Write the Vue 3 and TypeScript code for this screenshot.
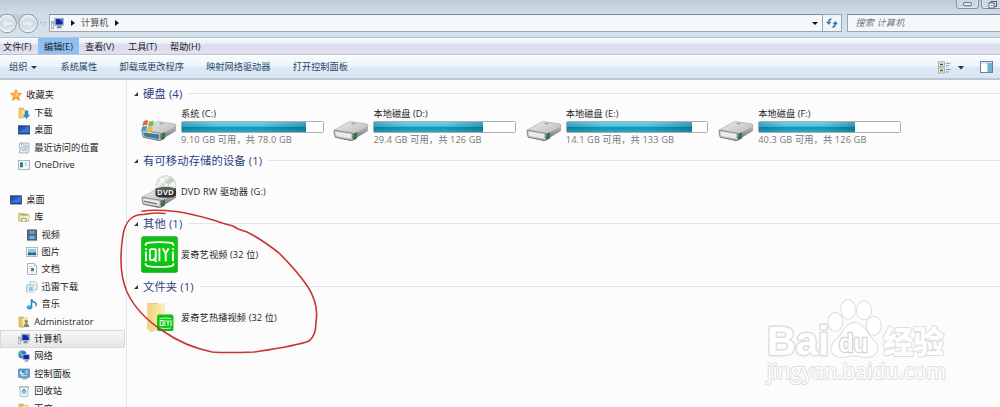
<script setup lang="ts">
interface NavItem { label: string; icon: string; level: number; active?: boolean; gap?: boolean }
interface Disk { name: string; info: string; used: number; icon: string }

const menus = [
  { label: '文件(F)', w: 38 },
  { label: '编辑(E)', w: 41, active: true },
  { label: '查看(V)', w: 43 },
  { label: '工具(T)', w: 42 },
  { label: '帮助(H)', w: 44 },
]
const commands = ['系统属性', '卸载或更改程序', '映射网络驱动器', '打开控制面板']
const nav: NavItem[] = [
  { label: '收藏夹', icon: 'star', level: 0 },
  { label: '下载', icon: 'download', level: 1 },
  { label: '桌面', icon: 'desktop', level: 1 },
  { label: '最近访问的位置', icon: 'recent', level: 1 },
  { label: 'OneDrive', icon: 'onedrive', level: 1 },
  { label: '桌面', icon: 'desktop', level: 0, gap: true },
  { label: '库', icon: 'library', level: 1 },
  { label: '视频', icon: 'video', level: 2 },
  { label: '图片', icon: 'picture', level: 2 },
  { label: '文档', icon: 'document', level: 2 },
  { label: '迅雷下载', icon: 'thunder', level: 2 },
  { label: '音乐', icon: 'music', level: 2 },
  { label: 'Administrator', icon: 'user', level: 1 },
  { label: '计算机', icon: 'computer', level: 1, active: true },
  { label: '网络', icon: 'network', level: 1 },
  { label: '控制面板', icon: 'control', level: 1 },
  { label: '回收站', icon: 'recycle', level: 1 },
  { label: '百度', icon: 'folder', level: 1 },
]
const disks: Disk[] = [
  { name: '系统 (C:)', info: '9.10 GB 可用，共 78.0 GB', used: 88.3, icon: 'drive-win' },
  { name: '本地磁盘 (D:)', info: '29.4 GB 可用，共 126 GB', used: 77, icon: 'drive' },
  { name: '本地磁盘 (E:)', info: '14.1 GB 可用，共 133 GB', used: 89.4, icon: 'drive' },
  { name: '本地磁盘 (F:)', info: '40.3 GB 可用，共 126 GB', used: 68, icon: 'drive' },
]
</script>

<template>
  <div class="window">
    <svg class="defs" width="0" height="0">
      <defs>
        <linearGradient id="gScreen" x1="0" y1="0" x2="1" y2="1"><stop offset="0" stop-color="#123a9c" /><stop offset=".5" stop-color="#2b66d0" /><stop offset="1" stop-color="#1d449d" /></linearGradient>
        <linearGradient id="gFolder" x1="0" y1="0" x2="1" y2="0"><stop offset="0" stop-color="#f5d985" /><stop offset="1" stop-color="#fbeeb9" /></linearGradient>
        <linearGradient id="gTop" x1="0" y1="0" x2="1" y2="1"><stop offset="0" stop-color="#eee" /><stop offset=".55" stop-color="#cfcfcf" /><stop offset="1" stop-color="#b5b5b5" /></linearGradient>
        <linearGradient id="gSide" x1="0" y1="0" x2="0" y2="1"><stop offset="0" stop-color="#b9b9b9" /><stop offset="1" stop-color="#6a6a6a" /></linearGradient>
        <linearGradient id="gBtn" x1="0" y1="0" x2="0" y2="1"><stop offset="0" stop-color="#e9eef3" /><stop offset=".5" stop-color="#cfd8e0" /><stop offset="1" stop-color="#e8f0f6" /></linearGradient>
        <linearGradient id="gGreen" x1="0" y1="0" x2="0" y2="1"><stop offset="0" stop-color="#13bd1c" /><stop offset=".5" stop-color="#08cf0c" /><stop offset="1" stop-color="#0bb814" /></linearGradient>
        <linearGradient id="gDvd" x1="0" y1="0" x2="1" y2="1"><stop offset="0" stop-color="#bbb" /><stop offset=".3" stop-color="#f3f3f3" /><stop offset=".5" stop-color="#b9cfb6" /><stop offset=".7" stop-color="#eee" /><stop offset="1" stop-color="#aaa" /></linearGradient>
      </defs>
      <symbol id="star" viewBox="0 0 12 12"><path d="M6 .6 7.6 4.2 11.5 4.6 8.6 7.2 9.5 11.2 6 9.2 2.5 11.2 3.4 7.2.5 4.6 4.4 4.2Z" fill="#ffb72f" stroke="#d98a2c" stroke-width=".8" /><path d="M6 2.5 7 5 9.4 5.3 6 7Z" fill="#ffdb72" /></symbol>
      <symbol id="download" viewBox="0 0 12 12"><path d="M1 1h4l1 1v9H1Z" fill="#f0d06e" stroke="#c9a33c" stroke-width=".6" /><path d="M4 3h5v7H4Z" fill="#fae9ae" stroke="#d5b65a" stroke-width=".5" /><path d="M7 4h3v4h1.6L8.5 11.6 5.4 8H7Z" fill="#2996d8" stroke="#2270ad" stroke-width=".5" /></symbol>
      <symbol id="desktop" viewBox="0 0 12 12"><rect x=".5" y="1.8" width="11" height="8.2" fill="url(#gScreen)" stroke="#33507d" stroke-width=".9" /><path d="M1 8.5 11 3v6H1Z" fill="#4b8ae5" opacity=".55" /><path d="M1 9.3h10" stroke="#203554" stroke-width=".8" /></symbol>
      <symbol id="recent" viewBox="0 0 12 12"><path d="M2 1h9v7l-1 3H1l1-3Z" fill="#e6edf1" stroke="#8b9ba5" stroke-width=".7" /><circle cx="3.6" cy="3.6" r="2.5" fill="#f8fafb" stroke="#8b9ba5" stroke-width=".7" /><path d="M3.6 2v1.8h1M7 4h3M6 6h4M4 8h5" stroke="#7d929f" stroke-width=".7" fill="none" /></symbol>
      <symbol id="onedrive" viewBox="0 0 12 12"><rect x=".5" y="1.5" width="11" height="9" fill="#f7fafb" stroke="#94a3ab" stroke-width=".8" /><rect x="2" y="3.3" width="3" height="5" fill="#278387" /><path d="M6.5 4h3M6.5 6h3" stroke="#a5b7bf" stroke-width=".8" /></symbol>
      <symbol id="library" viewBox="0 0 12 12"><path d="M.6 2h4l1 1h5v7H.6Z" fill="#f1d988" stroke="#c8a750" stroke-width=".6" /><path d="M2 4.5h9.5l-1 6H2Z" fill="#fbf0bd" stroke="#c8a750" stroke-width=".5" /><path d="M3 8.8q0-2.4 3-2.4t3 2.4v2H7.8V9q0-1.2-1.8-1.2T4.2 9v1.8H3Z" fill="#65b6dd" /><path d="M3 3.5h6" stroke="#68b56d" stroke-width="1" /></symbol>
      <symbol id="video" viewBox="0 0 12 12"><rect x="1" y=".5" width="10" height="11" rx=".6" fill="#343d47" /><rect x="3.2" y="1.4" width="5.6" height="4" fill="#679bd0" /><rect x="3.2" y="6.4" width="5.6" height="4" fill="#6faedc" /><path d="M2.1 1.5v9.5M9.9 1.5v9.5" stroke="#d8dde0" stroke-width=".9" stroke-dasharray="1 1" /></symbol>
      <symbol id="picture" viewBox="0 0 12 12"><rect x=".5" y="1.5" width="11" height="9" fill="#fff" stroke="#8d9fa9" stroke-width=".7" /><rect x="1.8" y="2.8" width="8.4" height="6.4" fill="#8bcde9" /><path d="M1.8 7 4 6 6 7.3 8 6l2.2 1v2.2H1.8Z" fill="#326f75" /></symbol>
      <symbol id="document" viewBox="0 0 12 12"><path d="M1.5.5h6.7l2.3 2.4v8.6h-9Z" fill="#fafcfd" stroke="#94a2ad" stroke-width=".8" /><path d="M8.2.5V3h2.3M3 3.5h3.8M3 5.5h1.5M3 9h5.5" fill="none" stroke="#aab8c2" stroke-width=".7" /><rect x="5" y="5" width="3" height="3" fill="#4e8090" /></symbol>
      <symbol id="thunder" viewBox="0 0 12 12"><path d="M4 .7h5l2 2v6H4Z" fill="#eef6fa" stroke="#88a7ba" stroke-width=".7" /><rect x=".8" y="4" width="7" height="7" fill="#d5eaf4" stroke="#83abc0" stroke-width=".7" /><rect x="2.3" y="5.3" width="5" height="5" fill="#8ac5df" stroke="#f7ffff" stroke-width=".8" /></symbol>
      <symbol id="music" viewBox="0 0 12 12"><path d="M5.5 9V1.2q.5 2.3 3 3.2t1.2 3.8" fill="none" stroke="#1f7fbb" stroke-width="1.4" /><ellipse cx="3.6" cy="9.3" rx="2.8" ry="2.1" fill="#2c9bd4" /><circle cx="3.2" cy="8.8" r=".8" fill="#92d7f0" /></symbol>
      <symbol id="user" viewBox="0 0 12 12"><path d="M1 1h4l1 1v9H1Z" fill="#e6c766" stroke="#b99b46" stroke-width=".6" /><path d="M4 2h5v9H4Z" fill="#fae9ad" stroke="#c8ac5c" stroke-width=".5" /><circle cx="8.3" cy="5.6" r="1.8" fill="#a58567" /><path d="M5.6 11q0-3.5 2.7-3.5T11.3 11Z" fill="#609776" /></symbol>
      <symbol id="computer" viewBox="0 0 12 12"><rect x="3.5" y="1" width="8" height="6.8" fill="#c7d0da" stroke="#8591a0" stroke-width=".5" /><rect x="4.3" y="1.8" width="6.5" height="5.2" fill="#1625ad" /><path d="M7.5 2h3.3v3Z" fill="#5478d8" /><path d="M6 8h3l1.3 2.3H5Z" fill="#818a94" /><rect x=".6" y="4" width="2" height="7" fill="#e3e7eb" stroke="#818992" stroke-width=".5" /><path d="M1 5.5h1.2" stroke="#4b5661" stroke-width=".6" /></symbol>
      <symbol id="network" viewBox="0 0 12 12"><circle cx="4.4" cy="4.5" r="4" fill="#2878c8" /><path d="M1 3Q3 .4 5 1L4 3 5 5 3 7 2 5Z" fill="#55b78b" /><rect x="5" y="4.6" width="6.5" height="5" fill="#1726ad" stroke="#c2ceda" stroke-width=".7" /><path d="M7.5 9.8h2v1.2H6.5h4" stroke="#77818b" stroke-width=".6" fill="none" /></symbol>
      <symbol id="control" viewBox="0 0 12 12"><rect x=".5" y="1" width="11" height="8.5" rx=".7" fill="#5a9fc8" stroke="#4881a8" stroke-width=".7" /><circle cx="4" cy="4.8" r="2.3" fill="#b9e1f3" /><path d="M4 4.8V2.5A2.3 2.3 0 0 1 6.3 4.8Z" fill="#266da1" /><path d="M7.5 3h2.5M7.5 5h2.5M3 7.7h6M4 10.8h5" stroke="#e1f2f9" stroke-width=".8" /><path d="M4 10.8h5" stroke="#79909f" stroke-width="1" /></symbol>
      <symbol id="recycle" viewBox="0 0 12 12"><path d="M1.5 1.5h9l-1 10h-7Z" fill="#f0f7fb" stroke="#8fa8b8" stroke-width=".7" /><path d="M1.5 2h9" stroke="#a7bdc9" /><path d="m4 7 2-2.5L8 7M7.7 8H4.4" fill="none" stroke="#3588be" stroke-width="1.2" /></symbol>
      <symbol id="folder" viewBox="0 0 12 12"><path d="M1 1h4l1 1v10H1Z" fill="#e6c766" stroke="#b99b46" stroke-width=".6" /><path d="M4 2.5h6V12H4Z" fill="#fae9ad" stroke="#c8ac5c" stroke-width=".6" /></symbol>
      <symbol id="drive" viewBox="0 0 36 22">
        <path d="M1 12 2 17.5 18 21 35 11V6.5L18 14Z" fill="url(#gSide)" />
        <path d="M1.3 10 16 1.8Q17 1.3 18.5 1.5L34 4Q36 5 34.5 7L21 14.5Z" fill="url(#gTop)" stroke="#969696" stroke-width=".5" />
        <path d="M1 10.2 21 13.5 20 20.5 3 17.5Q1 17 1 10.2Z" fill="#c2c2c2" stroke="#747474" stroke-width=".7" />
        <path d="M2.3 11.6 18.3 14.1 17.8 18.6 4 16.1Q2.7 15.7 2.3 11.6Z" fill="#e9e9ee" />
        <path d="m21 13.5 3-1.6v6.6L20 20.5Z" fill="#53645a" /><rect x="19.3" y="14.2" width="2" height="4" fill="#287d31" /><rect x="19.6" y="15" width="1" height="1.5" fill="#65df53" />
        <ellipse cx="20.5" cy="3.6" rx="2.3" ry=".8" fill="#a3a3a3" />
      </symbol>
      <symbol id="drive-win" viewBox="0 0 36 22">
        <use href="#drive" width="36" height="22" /><path d="M2 12.2 18.3 14.5 17.8 18.9 3.5 16.4Z" fill="#347f93" />
        <path d="M2.5 1.6Q5 -.3 7.2.7L6.2 5.5Q4 4.4 1.2 6.3Z" fill="#df643a" /><path d="M8.2 1Q10 2.1 13 .5l-1 5q-3 1.6-4.8.4Z" fill="#7eb64a" /><path d="M1.1 7Q4 5.4 6 6.4L5 10.6Q3 9.6 0 11.3Z" fill="#459bd6" /><path d="M7 6.8q2 1.2 4.8-.3l-1 4.7q-2.6 1.4-4.7.3Z" fill="#edbd39" />
      </symbol>
      <symbol id="dvd" viewBox="0 0 36 34">
        <g transform="translate(0 12)"><use href="#drive" width="36" height="22" /><path d="m3 14.2 13 2.7" stroke="#555" stroke-width="1" /></g>
        <circle cx="25" cy="10.5" r="10" fill="url(#gDvd)" stroke="#c5c5c5" stroke-width=".6" /><path d="m25 10.5-7-6 3-2.5ZM25 10.5l8-4 1.5 5Z" fill="#fff" opacity=".75" /><circle cx="25" cy="10" r="2.4" fill="#f8f8f8" stroke="#aaa" stroke-width=".6" />
        <path d="M14.5 13.5q10-3 20.5 0v6.8q-1 2.5-10.2 2.5t-10.3-2.5Z" fill="#333" /><path d="M14.5 13.5q10-3 20.5 0v2q-10-1-20.5 1Z" fill="#777" opacity=".6" />
        <text x="16" y="20.3" font-size="6.8" font-weight="700" fill="#f4f4f4" textLength="17" lengthAdjust="spacingAndGlyphs">DVD</text>
      </symbol>
      <symbol id="iqiyi" viewBox="0 0 37 37">
        <rect x=".4" y=".4" width="36.2" height="36.2" rx="2.5" fill="url(#gGreen)" stroke="#209829" stroke-width=".6" />
        <path d="M4.5 9.8V9Q5 6.9 8 6.7q10.5-1.3 21 0 3 .2 3.5 2.3v.8M4.5 27.2V28q.5 2.1 3.5 2.3 10.5 1.3 21 0 3-.2 3.5-2.3v-.8" fill="none" stroke="#fff" stroke-width="1.7" />
        <g fill="none" stroke="#fff" stroke-width="1.9"><path d="M5 15.6v9.6M18.4 12.2v13M21.8 12.2l2.9 5.6 2.9-5.6M24.7 17.3v7.9M32 15.6v9.6" /><rect x="9" y="13.1" width="5.7" height="11" rx="1" /><path d="m12.8 22 2.6 4" /></g><path d="M4 13h2M31 13h2" stroke="#fff" stroke-width="1.7" />
      </symbol>
      <symbol id="iqiyi-folder" viewBox="0 0 32 32">
        <path d="M3 1h11v27l-7 2-4-3Z" fill="#eccb79" /><path d="M6 3 21 1v25L7 30Z" fill="url(#gFolder)" /><path d="M3 1 8 4v26l-5-3Z" fill="#f2d58b" />
        <rect x="13" y="12.5" width="16.5" height="16.5" rx="2" fill="url(#gGreen)" /><path d="M15.5 16.5q5.8-1 11.5 0M15.5 26q5.8 1 11.5 0" fill="none" stroke="#fff" stroke-width=".8" /><g fill="none" stroke="#fff" stroke-width="1"><rect x="16.2" y="18.5" width="2.8" height="5" /><path d="m18.2 23 1 1.2M20.9 18.2V24M22.6 18.2l1.4 2.6 1.4-2.6M24 20.8V24M27 18.2V24" /></g>
      </symbol>
    </svg>

    <header class="title">
      <div class="arrows">
        <svg width="48" height="24" viewBox="0 0 48 24">
          <path d="M0 3h34v10H0Z" fill="#b5c0ca" opacity=".6" />
          <g v-for="x in [7, 28.2]" :key="x"><circle :cx="x" cy="12.5" r="9.2" fill="url(#gBtn)" stroke="#8a959f" stroke-width="1" /><circle :cx="x" cy="12.5" r="8.2" fill="none" stroke="#f8fbfd" stroke-width=".8" /></g>
          <path d="m2 12.5 5-5v3h6v4H7v3ZM33.2 12.5l-5-5v3h-6v4h6v3Z" fill="#e8eef3" stroke="#bfcad3" stroke-width=".5" />
          <path d="M40.7 11.7h5.2l-2.6 2.8Z" fill="#eff5f9" stroke="#93a1ae" stroke-width=".6" />
        </svg>
      </div>
      <div class="address">
        <svg class="pc"><use href="#computer" /></svg><i class="right"></i><span>计算机</span><i class="right"></i><i class="down"></i>
      </div>
      <div class="refresh"><svg width="12" height="10" viewBox="0 0 12 10"><path d="M5.5 1.2Q2.7 1 2.7 4M6.3 9Q9.3 9 9.3 6" fill="none" stroke="#2f77b0" stroke-width="1.5" /><path d="M0 3.7h5.4L2.7 7ZM6.6 6.2H12L9.3 3Z" fill="#2f77b0" /></svg></div>
      <div class="search">搜索 计算机</div>
      <div class="winbtn min"><svg width="9" height="5"><rect x=".7" y=".7" width="7.6" height="3" rx=".5" fill="#fafcff" stroke="#596574" /></svg></div>
      <div class="winbtn max"><svg width="9" height="8"><rect x="3" y=".5" width="5.5" height="5" fill="none" stroke="#596574" /><rect x="1" y="2" width="5" height="5" fill="#fff" stroke="#596574" /><rect x="3" y="4" width="1.5" height="1" fill="#596574" /></svg></div>
    </header>
    <nav class="menu"><span v-for="m in menus" :key="m.label" :class="{ active: m.active }" :style="{ width: m.w + 'px' }">{{ m.label }}</span></nav>
    <div class="toolbar">
      <span class="org">组织<i class="down"></i></span>
      <span v-for="c in commands" :key="c" class="cmd">{{ c }}</span>
      <svg class="view" width="27" height="13" viewBox="0 0 27 13"><rect x=".5" y=".8" width="6" height="5" fill="#e6ead9" stroke="#939c8b" stroke-width=".7" /><rect x=".5" y="7" width="6" height="5" fill="#f2edbe" stroke="#939c8b" stroke-width=".7" /><path d="M2 3.5h3M2 9.5h3" stroke="#2b5a61" stroke-width="1.3" /><path d="M8 2.3h4.5M8 4.8h3M8 8.5h4.5M8 11h3" stroke="#8b96a4" /><path d="M20 5h6l-3 3.5Z" fill="#1f3356" /></svg>
      <svg class="pane" width="13" height="12" viewBox="0 0 13 12"><rect x=".5" y=".5" width="12" height="11" fill="#fff" stroke="#68829b" /><path d="M1 2h11" stroke="#bac7d3" /><rect x="8" y="2" width="4" height="9" fill="#68b8d5" /><path d="M7.7 1v10" stroke="#6d9eb8" stroke-width=".6" /></svg>
    </div>
    <div class="body">
      <aside>
        <div v-for="(n, i) in nav" :key="i" class="row" :class="['l' + n.level, { active: n.active, gap: n.gap }]">
          <svg class="ico"><use :href="'#' + n.icon" /></svg><span>{{ n.label }}</span>
        </div>
      </aside>
      <main>
        <section class="g1">
          <h2><i></i>硬盘 (4)<b></b></h2>
          <div class="disks">
            <div v-for="d in disks" :key="d.name" class="disk">
              <svg class="drive"><use :href="'#' + d.icon" /></svg>
              <div class="meta"><div class="name">{{ d.name }}</div><div class="bar"><div class="fill" :style="{ width: d.used + '%' }"></div></div><div class="info">{{ d.info }}</div></div>
            </div>
          </div>
        </section>
        <section class="g2"><h2><i></i>有可移动存储的设备 (1)<b></b></h2><div class="item"><svg width="36" height="34"><use href="#dvd" /></svg><span>DVD RW 驱动器 (G:)</span></div></section>
        <section class="g3"><h2><i></i>其他 (1)<b></b></h2><div class="item"><svg width="37" height="37"><use href="#iqiyi" /></svg><span>爱奇艺视频 (32 位)</span></div></section>
        <section class="g4"><h2><i></i>文件夹 (1)<b></b></h2><div class="item"><svg class="fold" width="32" height="32"><use href="#iqiyi-folder" /></svg><span>爱奇艺热播视频 (32 位)</span></div></section>
      </main>
    </div>
    <svg class="overlay" width="1000" height="407" viewBox="0 0 1000 407">
      <path d="M142 211.3C152 209.5 167 210.6 176 211.5C190 213.4 203 217 214 220.2L222 223L233 226L238 229L247 232C259 238 270 246 279 253C290 264 300 275 308 287C315 298 318 310 316 322C316 332 313 338 309 341C296 346 274 349 254 352C240 352.5 225 353 212 352C193 348 177 341 163 331C146 320 134 307 127 292C120 276 120 254 123 235C125 222 132 214 144 214.5C150 213 158 212.6 165 213.5" fill="none" stroke="#c93434" stroke-width="1.6" stroke-linecap="round" stroke-linejoin="round" />
      <g class="mark">
        <text x="767" y="355" class="logo" textLength="62" lengthAdjust="spacingAndGlyphs">Bai</text>
        <g class="paw"><ellipse cx="835.3" cy="322" rx="7" ry="9" /><ellipse cx="848" cy="309.3" rx="6.8" ry="9.2" /><ellipse cx="864" cy="310.3" rx="7.2" ry="9" /><ellipse cx="873.7" cy="325.7" rx="7" ry="9" /><path d="M835 341Q841 336 844 330Q854 316 865 329Q868 335 874 341Q881 350 873 355.5Q868 358 860 356Q854 354.5 848 356Q838 358.500 833 354Q829 348 835 341Z" /></g>
        <text x="839" y="352" class="du" textLength="29" lengthAdjust="spacingAndGlyphs">du</text>
        <text x="883" y="353" class="cn" textLength="61" lengthAdjust="spacingAndGlyphs">经验</text>
        <text x="767" y="379" class="site" textLength="179" lengthAdjust="spacingAndGlyphs">jingyan.baidu.com</text>
      </g>
    </svg>
  </div>
</template>

<style>
html, body { margin: 0; overflow: hidden; }
</style>
<style scoped>
.window { position: relative; width: 1000px; height: 407px; overflow: hidden; background: #fcfcfc; font: 9.2px/12px "Open Sans", "Noto Sans CJK SC", sans-serif; color: #1c1c1c; white-space: nowrap; display: flex; flex-direction: column; }
.window * { box-sizing: border-box; }
.defs { position: absolute; }
svg { flex: none; display: block; }
.title { height: 37px; flex: none; background: linear-gradient(#bfccd8, #cfdce8 35%, #d6e2ee); display: flex; align-items: flex-start; }
.arrows { width: 49px; padding-top: 11px; }
.address { height: 18px; width: 774px; margin-top: 14px; border: 1px solid #9aa5b0; border-top-color: #7e8b98; background: #f5f8fa; display: flex; align-items: center; color: #555; }
.pc { width: 13px; height: 13px; margin-left: 1px; }
.right { border: 3px solid transparent; border-left: 4px solid #111; border-right: 0; margin-left: 6.5px; margin-right: 6.5px; }
.address span { position: relative; top: -.5px; }
.address .down { margin-left: auto; margin-right: 4px; }
.down { border: 3px solid transparent; border-top: 3.5px solid #111; border-bottom: 0; }
.refresh { height: 18px; width: 19px; margin-top: 14px; border: 1px solid #9aa5b0; border-left: 0; background: #eff5fa; display: flex; align-items: center; justify-content: center; }
.search { height: 18px; width: 153px; margin: 14px 0 0 5px; border: 1px solid #9aa5b0; border-top-color: #7e8b98; border-right: 0; background: #f5f8fa; padding: 2px 0 0 7.5px; font-style: italic; color: #777; letter-spacing: .1px; }
.winbtn { position: absolute; top: -2px; height: 11px; border: 1px solid #8391a0; border-radius: 0 0 3px 3px; display: flex; align-items: center; justify-content: center; background: #cbd8e4; box-shadow: inset 0 0 0 1px #dce7f0; }
.min { left: 956px; width: 23px; padding-top: 2px; }
.max { left: 981px; width: 23px; padding-top: 2px; }
.menu { height: 18px; flex: none; display: flex; background: linear-gradient(#f9fbfd, #e8edf6 35%, #d7dcef 42%, #e1dff0 90%); border-top: 1px solid #b5c2cf; border-bottom: 1px solid #bfc4d0; line-height: 17px; }
.menu span { padding-left: 3px; }
.menu span.active { background: #8fc0f4; padding-left: 6px; }
.menu span:nth-child(n+3) { padding-left: 6px; }
.toolbar { height: 25px; flex: none; display: flex; align-items: center; background: linear-gradient(#f6fbfe, #edf5fb 45%, #dce7f5 55%, #dce7f4); border-top: 1px solid #fff; border-bottom: 2px solid #b9c8d1; color: #274864; }
.org { width: 60.5px; padding-left: 9px; display: flex; align-items: center; }
.org .down { margin-left: 4px; border-top-color: #1b3658; }
.cmd { margin-right: 22.3px; }
.view { margin-left: auto; margin-right: 15px; }
.pane { margin-right: 7px; }
.body { flex: 1; min-height: 0; display: flex; }
aside { width: 127px; border-right: 1.5px solid #d9e8f3; padding-top: 6.6px; overflow: hidden; flex: none; }
.row { height: 17.42px; display: flex; align-items: center; padding-left: 10px; width: 125px; flex: none; }
.row.gap { margin-top: 17.42px; }
.row.l1 { padding-left: 18px; }
.row.l2 { padding-left: 26px; }
.row.active { background: linear-gradient(#f7f7f7, #e4e4e4); box-shadow: inset 0 0 0 1px #d8d8d8; border-radius: 0 2px 2px 0; }
.ico { width: 12px; height: 12px; margin-right: 4.3px; }
.l2 .ico { margin-right: 3.5px; }
main { flex: 1; min-width: 0; padding-top: 6px; }
h2 { margin: 0; height: 15px; font: 400 11.3px/15px "Open Sans", "Noto Sans CJK SC", sans-serif; letter-spacing: .12px; color: #2f3f82; display: flex; align-items: center; }
h2 i { margin: 0 5px 0 7px; border-left: 4.5px solid transparent; border-bottom: 4.5px solid #333; }
h2 b { flex: 1; height: 1px; background: #e3e5e9; margin-left: 6px; }
.g1 { height: 67px; }
.g2, .g3 { height: 63px; }
.disks { display: flex; padding: 6px 0 0 14px; }
.disk { width: 192.4px; flex: none; display: flex; }
.drive { width: 36px; height: 22px; margin: 13px 4px 0 0; }
.meta { width: 142.5px; }
.name { height: 14px; line-height: 13px; letter-spacing: .08px; }
.bar { height: 12px; border: 1px solid #a9adb0; border-radius: 1.5px; background: #fff; }
.fill { height: 100%; background: linear-gradient(90deg, rgba(0,80,110,.3), transparent 28%, transparent 65%, rgba(0,70,100,.35)), linear-gradient(#70d5e8, #46bdd7 45%, #158faf 52%, #25aac6); }
.info { color: #777; line-height: 14px; letter-spacing: .15px; }
.item { display: flex; align-items: center; height: 38px; margin: 4.5px 0 0 14px; letter-spacing: .12px; }
.item svg { margin-right: 4px; }
.g3 .item svg { margin-right: 3px; }
.g4 .item .fold { margin-left: 3px; margin-right: 5px; }
.g2 .item { margin-top: 5px; letter-spacing: .18px; }
.overlay { position: absolute; inset: 0; pointer-events: none; }
.mark { fill: #fff; stroke: #dedede; stroke-width: 1.5; stroke-linejoin: round; paint-order: stroke; }
.paw { stroke-width: 2; }
.logo { font: 700 40px "Liberation Sans", sans-serif; stroke-width: 3; }
.du { font: 700 25px "Liberation Sans", sans-serif; stroke: #d2d2d2; stroke-width: 2.5; }
.cn { font: 900 31px "Noto Sans CJK SC", sans-serif; stroke-width: 2; }
.site { font: 400 21px "Open Sans", sans-serif; stroke-width: 2; }
</style>
